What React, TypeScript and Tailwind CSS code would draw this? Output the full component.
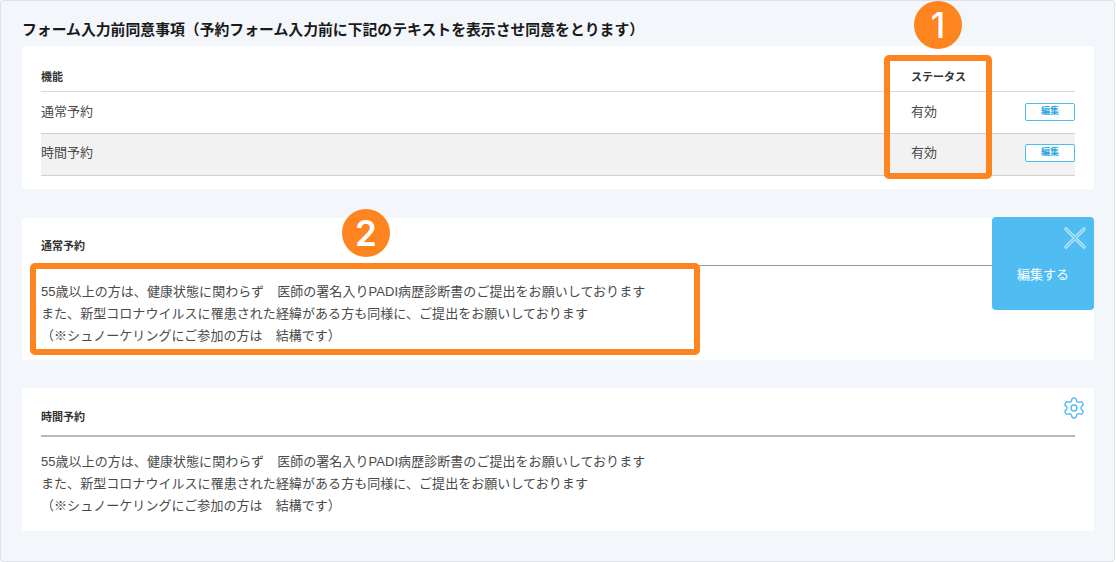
import { Settings } from "lucide-react";

function Notice() {
  return (
    <div className="text-[13px] leading-[22px] tracking-[0.05px] text-[#4a4a4a]">
      <p>55歳以上の方は、健康状態に関わらず　医師の署名入りPADI病歴診断書のご提出をお願いしております</p>
      <p>また、新型コロナウイルスに罹患された経緯がある方も同様に、ご提出をお願いしております</p>
      <p>（※シュノーケリングにご参加の方は　結構です）</p>
    </div>
  );
}

function StatusRow({ name, shaded }: { name: string; shaded?: boolean }) {
  return (
    <div
      className={`flex h-[42px] items-center border-b border-[#cfcfcf] text-[13px] text-[#4a4a4a] ${
        shaded ? "bg-[#f2f2f2] pb-[3px]" : "pb-[2px]"
      }`}
    >
      <div className="flex-1">{name}</div>
      <div className="w-[114px]">有効</div>
      <button
        type="button"
        className="flex h-[18px] w-[50px] items-center justify-center rounded-[2px] border border-[#4dbdf1] bg-white text-[9px] font-bold text-[#2aa5e0]"
      >
        編集
      </button>
    </div>
  );
}

export default function App() {
  return (
    <div className="h-[562px] w-[1116px] overflow-hidden bg-white font-['Liberation_Sans','Noto_Sans_CJK_JP',sans-serif]">
      <div className="relative h-[562px] w-[1115px] rounded-[3px] border border-[#dfe3e8] bg-[#f3f6fa] pl-[21px] pr-[20px] pt-[19px]">
        <h2 className="text-[14.85px] font-bold leading-[20px] text-[#1a1a1a]">
          フォーム入力前同意事項（予約フォーム入力前に下記のテキストを表示させ同意をとります）
        </h2>

        <section className="mt-[6px] h-[143px] rounded-[3px] bg-white px-[19px] pt-[11px]">
          <div className="flex h-[35px] items-center border-b border-[#d8d8d8] pt-[6px] text-[11px] font-bold text-[#333]">
            <div className="flex-1">機能</div>
            <div className="w-[164px]">ステータス</div>
          </div>
          <StatusRow name="通常予約" />
          <StatusRow name="時間予約" shaded />
        </section>

        <section className="relative mt-[29px] h-[142px] rounded-[3px] bg-white px-[19px]">
          <div className="flex h-[48px] items-end border-b border-[#9a9a9a] pb-[12px] text-[11px] font-bold leading-[14px] text-[#333]">
            通常予約
          </div>
          <div className="mt-[15px]">
            <Notice />
          </div>
          <div className="absolute right-0 top-[-1px] flex h-[93px] w-[102px] items-center justify-center rounded-[4px] bg-[#4fbdf2] text-[13px] text-white">
            <svg viewBox="0 0 22 22" className="absolute right-[8px] top-[10px] h-[22px] w-[22px]" fill="none" strokeLinecap="round">
              <path d="M2 2 20 20M20 2 2 20" stroke="#cdebfb" strokeWidth="3.2" />
              <path d="M2 2 20 20M20 2 2 20" stroke="#6cc8f4" strokeWidth="1.4" />
            </svg>
            <span className="mt-[22px]">編集する</span>
          </div>
        </section>

        <section className="relative mt-[28px] h-[143px] rounded-[3px] bg-white px-[19px]">
          <div className="flex h-[49px] items-end border-b-2 border-[#b8b8b8] pb-[11px] text-[11px] font-bold leading-[14px] text-[#333]">
            時間予約
          </div>
          <div className="mt-[14px]">
            <Notice />
          </div>
          <Settings className="absolute right-[8px] top-[8px] h-[24px] w-[24px] text-[#4fbdf2]" strokeWidth={1.4} />
        </section>

        <div className="absolute left-[883px] top-[54px] h-[124px] w-[108px] rounded-[5px] border-[6px] border-[#fd841f]" />
        <div className="absolute left-[29px] top-[262px] h-[92px] w-[670px] rounded-[5px] border-[6px] border-[#fd841f]" />
        <div className="absolute left-[913px] top-0 flex h-[48px] w-[48px] items-center justify-center rounded-full bg-[#fd841f] font-['Inter',sans-serif] text-[35px] font-medium text-white">
          1
        </div>
        <div className="absolute left-[341px] top-[208px] flex h-[48px] w-[48px] items-center justify-center rounded-full bg-[#fd841f] font-['Inter',sans-serif] text-[35px] font-semibold text-white">
          2
        </div>
      </div>
    </div>
  );
}
